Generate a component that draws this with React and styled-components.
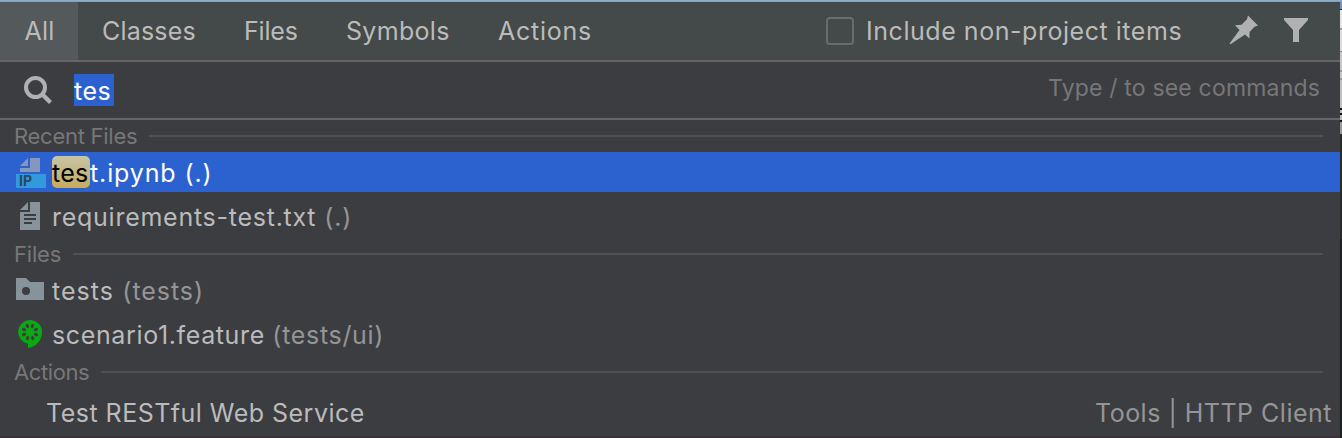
import React from "react";
import styled, { createGlobalStyle } from "styled-components";

const Global = createGlobalStyle`
  * { box-sizing: border-box; }
  body { margin: 0; background: #3c3d41; overflow: hidden; }
`;

const Screen = styled.div`
  display: grid;
  grid-template-columns: 1340px 2px;
  grid-template-rows: 2px 436px;
  width: 1342px;
  height: 438px;
  font-family: Inter, "Liberation Sans", sans-serif;
  font-size: 25px;
  color: #bbbbbb;
`;

const TopEdge = styled.div`
  grid-column: 1 / 3;
  background: linear-gradient(#8fb3d3, #7c9cb8);
`;

const Popup = styled.main`
  display: flex;
  flex-direction: column;
  background: #3c3d41;
`;

const Behind = styled.div`
  background: linear-gradient(
    #7592b3 0 7px, #222 7px 8px, #e6e6e6 8px 26px, #999 26px 28px,
    #dcdcdc 28px 49px, #888 49px 50px, #c8c8c8 50px 68px, #999 68px 70px,
    #c8c8c8 70px 76px, #999 76px 78px, #c0c0c0 78px 106px, #111 106px 108px,
    #bbb 108px 111px, #111 111px 113px, #bbb 113px 118px, #111 118px 120px,
    #999 120px 132px, #2b2b2b 132px 237px, #1e1f20 237px
  );
`;

const Header = styled.header`
  display: flex;
  align-items: center;
  height: 60px;
  background: #444a49;
  border-bottom: 2px solid #656565;
`;

const Tabs = styled.nav`
  display: flex;
  height: 58px;
  flex: 1;
`;

const Tab = styled.button`
  width: ${(p) => p.$width}px;
  padding: 0 0 0 ${(p) => (p.$active ? 24.5 : 24)}px;
  border: 0;
  text-align: left;
  white-space: nowrap;
  font: inherit;
  line-height: 58px;
  color: inherit;
  letter-spacing: ${(p) => p.$spacing}px;
  background: ${(p) => (p.$active ? "#54595c" : "transparent")};
`;

const Scope = styled.label`
  display: flex;
  align-items: center;
  width: 403px;
`;

const Checkbox = styled.span`
  width: 28px;
  height: 28px;
  margin: 0 12px 0 0;
  border: 2px solid #6b6b6b;
  border-radius: 4px;
`;

const Label = styled.span`
  white-space: nowrap;
  line-height: 32px;
  font-size: ${(p) => p.$size || 25}px;
  letter-spacing: ${(p) => p.$spacing || 0}px;
  color: ${(p) => p.$color || "inherit"};
  margin-left: ${(p) => p.$left || 0}px;
  margin-bottom: ${(p) => p.$lift || 0}px;
`;

const Tools = styled.div`
  display: flex;
  gap: 22px;
  width: 111px;
`;

const Icon = styled.svg`
  display: block;
  flex: none;
`;

const SearchBar = styled.div`
  display: flex;
  align-items: center;
  height: 58px;
  padding: 0 20px 0 22px;
  border-bottom: 2px solid #656565;
`;

const Query = styled.div`
  flex: 1;
  margin-left: 20px;
`;

const Selected = styled.span`
  display: block;
  width: 40px;
  height: 32px;
  line-height: 35px;
  white-space: nowrap;
  color: #fff;
  background: #2b62cf;
  letter-spacing: 0.5px;
`;

const GroupTitle = styled.div`
  display: flex;
  align-items: center;
  gap: 12px;
  height: ${(p) => p.$height}px;
  padding: 0 17px 0 14px;
  color: #777777;

  &::after {
    content: "";
    flex: 1;
    height: 2px;
    background: #505150;
  }
`;

const Row = styled.div`
  display: flex;
  align-items: center;
  height: ${(p) => p.$height}px;
  padding-left: ${(p) => p.$indent ?? 14}px;
  padding-right: 8px;
  padding-top: ${(p) => p.$top || 0}px;
  color: ${(p) => (p.$selected ? "#ffffff" : "#bbbbbb")};
  background: ${(p) => (p.$selected ? "#2b62cf" : "transparent")};

  ${Label} {
    margin-top: ${(p) => p.$drop || 0}px;
  }
`;

const IconCell = styled.span`
  width: 38px;
  flex: none;
`;

const Match = styled.mark`
  height: 32px;
  width: 38px;
  line-height: 35px;
  letter-spacing: 0.2px;
  white-space: nowrap;
  border-radius: 5px;
  color: #000;
  background: linear-gradient(#c6c5a5, #c6ab5c);
`;

const Location = styled.span`
  margin-left: auto;
  color: #959595;
  white-space: nowrap;
  letter-spacing: 0.5px;
`;

const BottomEdge = styled.div`
  height: 2px;
  margin-top: auto;
  background: #3b323d;
`;

const SearchIcon = () => (
  <Icon width="32" height="32" viewBox="0 0 32 32" fill="none" stroke="#afb1b3">
    <circle cx="13.5" cy="13.5" r="9.5" strokeWidth="4" />
    <path d="M20 20 L28.5 28.5" strokeWidth="4.2" />
  </Icon>
);

const PinIcon = () => (
  <Icon width="32" height="32" viewBox="0 0 32 32" fill="#afb1b3">
    <path d="M19 .5 L29 10.5 L25.5 11.8 L20.5 17 L20.5 23.500 L16 19.5 L1.5 29.2 L.5 28.5 L10.5 15 L6 10.2 L12.5 9.7 L18 4.2 Z" />
  </Icon>
);

const FilterIcon = () => (
  <Icon width="28" height="32" viewBox="0 0 28 32" fill="#afb1b3">
    <path d="M1 3 H25 V5 L16 15 V27 H10 V15 L1 5 Z" />
  </Icon>
);

const NotebookIcon = () => (
  <Icon width="32" height="32" viewBox="0 0 32 32">
    <path d="M14 2 V10 H6 Z M16 2 H26 V16 H6 V12 H16 Z" fill="#8797bb" />
    <path d="M2 18 H32 V32 H2 Z" fill="#3199dc" />
    <text x="5" y="30" fontFamily="Inter, sans-serif" fontWeight="700" fontSize="14" fill="#27485e">IP</text>
  </Icon>
);

const TextIcon = () => (
  <Icon width="32" height="32" viewBox="0 0 32 32">
    <path d="M14 2 V10 H6 Z M16 2 H26 V30 H6 V12 H16 Z" fill="#87939a" />
    <path d="M10 15 H22 M10 19 H22 M10 23 H18" stroke="#3c3d41" strokeWidth="2" />
  </Icon>
);

const FolderIcon = () => (
  <Icon width="32" height="32" viewBox="0 0 32 32">
    <path d="M2 4 H12 L16 8 H30 V26 H2 Z" fill="#87939a" />
    <circle cx="12" cy="17" r="4" fill="#3c3d41" />
  </Icon>
);

const seeds = [22, 67, 112, 157, 202, 247, 292, 337];

const CucumberIcon = () => (
  <Icon width="32" height="32" viewBox="0 0 32 32">
    <path d="M16 1 A12 12 0 0 1 28 13 C28 21.500 22 28 14 29 V24.800 A12 12 0 0 1 16 1 Z" fill="#0aa812" />
    {seeds.map((a) => (
      <ellipse key={a} cx="16" cy="6.500" rx="1.600" ry="2.200" fill="#3c3d41" transform={`rotate(${a} 16 13)`} />
    ))}
  </Icon>
);

export default function App() {
  return (
    <Screen>
      <Global />
      <TopEdge />
      <Popup>
        <Header>
          <Tabs>
            <Tab $active $width={78} $spacing={0.2}>All</Tab>
            <Tab $width={142} $spacing={0.2}>Classes</Tab>
            <Tab $width={102} $spacing={-0.2}>Files</Tab>
            <Tab $width={152} $spacing={0.3}>Symbols</Tab>
            <Tab $width={142} $spacing={0.75}>Actions</Tab>
          </Tabs>
          <Scope>
            <Checkbox />
            <Label $spacing={0.54}>Include non-project items</Label>
          </Scope>
          <Tools><PinIcon /><FilterIcon /></Tools>
        </Header>
        <SearchBar>
          <SearchIcon />
          <Query><Selected>tes</Selected></Query>
          <Label $size={23} $spacing={0.18} $lift={4} $color="#777777">Type / to see commands</Label>
        </SearchBar>
        <GroupTitle $height={32}><Label $size={22} $spacing={-0.27}>Recent Files</Label></GroupTitle>
        <Row $height={40} $drop={2} $selected>
          <IconCell><NotebookIcon /></IconCell>
          <Match>tes</Match>
          <Label $spacing={0.88}>t.ipynb (.)</Label>
        </Row>
        <Row $height={48} $drop={2}>
          <IconCell><TextIcon /></IconCell>
          <Label $spacing={0.74}>requirements-test.txt</Label>
          <Label $spacing={0.8} $color="#959595" $left={8}>(.)</Label>
        </Row>
        <GroupTitle $height={28}><Label $size={22} $spacing={-0.2}>Files</Label></GroupTitle>
        <Row $height={44} $drop={2}>
          <IconCell><FolderIcon /></IconCell>
          <Label $spacing={1}>tests</Label>
          <Label $spacing={0.95} $color="#959595" $left={8.5}>(tests)</Label>
        </Row>
        <Row $height={46}>
          <IconCell><CucumberIcon /></IconCell>
          <Label $spacing={0.63}>scenario1.feature</Label>
          <Label $spacing={0.68} $color="#959595" $left={7.5}>(tests/ui)</Label>
        </Row>
        <GroupTitle $height={28}><Label $size={22} $spacing={-0.4}>Actions</Label></GroupTitle>
        <Row $height={48} $top={6} $indent={46}>
          <Label $spacing={0.48}>Test RESTful Web Service</Label>
          <Location>Tools | HTTP Client</Location>
        </Row>
        <BottomEdge />
      </Popup>
      <Behind />
    </Screen>
  );
}
